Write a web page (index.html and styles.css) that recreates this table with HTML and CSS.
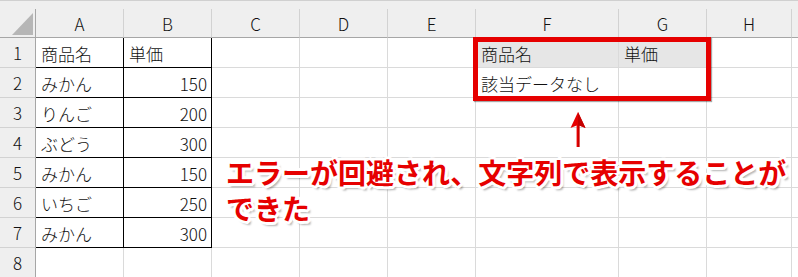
FILE: index.html
```html
<!DOCTYPE html>
<html lang="ja">
<head>
<meta charset="utf-8">
<title>Excel sheet</title>
<link rel="stylesheet" href="styles.css">
</head>
<body>
<div class="sheet">
  <div class="topbar"></div>
  <div class="grid">
    <div class="corner"></div>
    <div class="ch">A</div><div class="ch">B</div><div class="ch">C</div><div class="ch">D</div><div class="ch">E</div><div class="ch">F</div><div class="ch">G</div><div class="ch">H</div><div class="ch end"></div>

    <div class="rh">1</div>
    <div class="c t">商品名</div><div class="c t">単価</div><div class="c"></div><div class="c"></div><div class="c"></div><div class="c hd">商品名</div><div class="c hd">単価</div><div class="c"></div><div class="c"></div>

    <div class="rh">2</div>
    <div class="c t">みかん</div><div class="c t n">150</div><div class="c"></div><div class="c"></div><div class="c"></div><div class="c">該当データなし</div><div class="c"></div><div class="c"></div><div class="c"></div>

    <div class="rh">3</div>
    <div class="c t">りんご</div><div class="c t n">200</div><div class="c"></div><div class="c"></div><div class="c"></div><div class="c"></div><div class="c"></div><div class="c"></div><div class="c"></div>

    <div class="rh">4</div>
    <div class="c t">ぶどう</div><div class="c t n">300</div><div class="c"></div><div class="c"></div><div class="c"></div><div class="c"></div><div class="c"></div><div class="c"></div><div class="c"></div>

    <div class="rh">5</div>
    <div class="c t">みかん</div><div class="c t n">150</div><div class="c"></div><div class="c"></div><div class="c"></div><div class="c"></div><div class="c"></div><div class="c"></div><div class="c"></div>

    <div class="rh">6</div>
    <div class="c t">いちご</div><div class="c t n">250</div><div class="c"></div><div class="c"></div><div class="c"></div><div class="c"></div><div class="c"></div><div class="c"></div><div class="c"></div>

    <div class="rh">7</div>
    <div class="c t">みかん</div><div class="c t n">300</div><div class="c"></div><div class="c"></div><div class="c"></div><div class="c"></div><div class="c"></div><div class="c"></div><div class="c"></div>

    <div class="rh">8</div>
    <div class="c"></div><div class="c"></div><div class="c"></div><div class="c"></div><div class="c"></div><div class="c"></div><div class="c"></div><div class="c"></div><div class="c"></div>
  </div>

  <div class="highlight"></div>
  <svg class="arrow" width="18" height="36" viewBox="0 0 18 36">
    <path d="M9 0 L16.5 16 L10.4 13.5 L10.4 35 L7.6 35 L7.6 13.5 L1.5 16 Z" fill="#e60000"/>
    <path d="M9 0 L9 35 L10.4 35 L10.4 13.5 L16.5 16 Z" fill="#c40000"/>
  </svg>
  <p class="callout">エラーが回避され、文字列で表示することが<br>できた</p>
</div>
</body>
</html>
```

FILE: styles.css
```css
html, body {
  margin: 0;
  padding: 0;
  background: #ffffff;
}

.sheet {
  position: relative;
  width: 798px;
  height: 277px;
  overflow: hidden;
  font-family: "Noto Sans CJK JP", "Noto Sans", sans-serif;
  font-size: 17px;
  font-weight: 300;
  color: #111;
}

.topbar {
  height: 9px;
  background: #efefef;
  border-top: 1px solid #d0d0d0;
  box-sizing: border-box;
}

.grid {
  display: grid;
  grid-template-columns: 36px 88px 88px 88px 88px 88px 143px 88px 85px 1fr;
  grid-template-rows: 29px repeat(8, 30px);
}

.grid > div {
  box-sizing: border-box;
  display: flex;
  align-items: center;
  white-space: nowrap;
  overflow: hidden;
}

.corner {
  position: relative;
  background: #efefef;
  border-right: 1px solid #a6a6a6;
  border-bottom: 1px solid #a6a6a6;
}

.corner::after {
  content: "";
  position: absolute;
  left: 12px;
  top: 4px;
  width: 21px;
  height: 22px;
  background: #b6b6b6;
  clip-path: polygon(100% 0, 100% 100%, 0 100%);
}

.ch {
  justify-content: center;
  background: #efefef;
  border-right: 1px solid #d2d2d2;
  border-bottom: 1px solid #a6a6a6;
  color: #111;
  padding-top: 1px;
}

.ch.end {
  border-right: none;
}

.rh {
  justify-content: center;
  background: #efefef;
  border-right: 1px solid #a6a6a6;
  border-bottom: 1px solid #d2d2d2;
  color: #111;
}

.c {
  padding: 0 4px 0 5px;
  border-right: 1px solid #dadada;
  border-bottom: 1px solid #dadada;
  padding-top: 1px;
}

.c.t {
  border-right: 1px solid #000;
  border-bottom: 1px solid #000;
}

.c.n {
  justify-content: flex-end;
}

.c.hd {
  background: #e6e6e6;
}

.highlight {
  position: absolute;
  left: 473px;
  top: 37px;
  width: 238px;
  height: 64px;
  box-sizing: border-box;
  border: 5px solid #e60000;
  box-shadow: 1px 1px 1px rgba(0, 0, 0, 0.35);
}

.arrow {
  position: absolute;
  left: 569px;
  top: 112px;
}

.callout {
  position: absolute;
  left: 226px;
  top: 154px;
  margin: 0;
  font-size: 28px;
  line-height: 36px;
  font-weight: 700;
  color: #e60000;
  white-space: nowrap;
  text-shadow:
    2px 0 0 #fff, -2px 0 0 #fff, 0 2px 0 #fff, 0 -2px 0 #fff,
    2px 2px 0 #fff, -2px -2px 0 #fff, 2px -2px 0 #fff, -2px 2px 0 #fff,
    3px 1px 0 #fff, 1px 3px 0 #fff, -3px 1px 0 #fff, 1px -3px 0 #fff,
    3px 4px 2px rgba(0, 0, 0, 0.3);
}
```
